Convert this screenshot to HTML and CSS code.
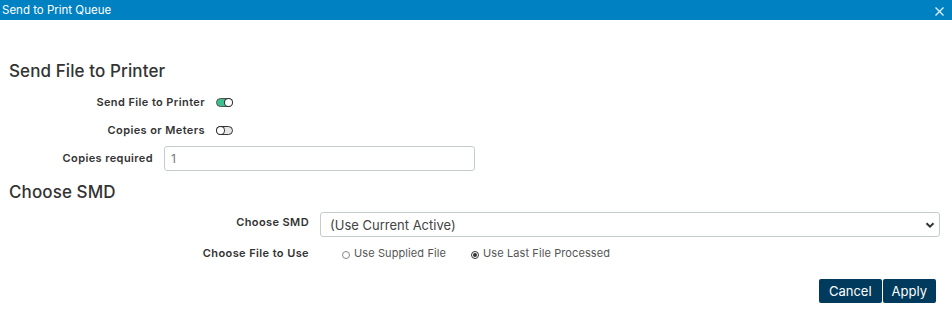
FILE: index.html
```html
<!DOCTYPE html>
<html lang="en">
<head>
  <meta charset="utf-8">
  <title>Send to Print Queue</title>
  <link rel="stylesheet" href="styles.css">
</head>
<body>
  <div class="dialog">
    <div class="dialog-title">
      <span>Send to Print Queue</span>
      <svg class="close" width="9" height="9" viewBox="0 0 9 9"><path d="M0.5 0.5 8.5 8.5 M8.5 0.5 0.5 8.5" fill="none" stroke="#d8f0ff" stroke-width="1.4"/></svg>
    </div>
    <div class="dialog-body">
      <h3 class="section-title first">Send File to Printer</h3>
      <div class="row">
        <label class="lbl lbl-wide">Send File to Printer</label>
        <span class="toggle on"></span>
      </div>
      <div class="row">
        <label class="lbl lbl-wide">Copies or Meters</label>
        <span class="toggle"></span>
      </div>
      <div class="row">
        <label class="lbl lbl-narrow">Copies required</label>
        <input class="text-input" type="text" value="1">
      </div>

      <h3 class="section-title">Choose SMD</h3>
      <div class="row">
        <label class="lbl lbl-smd">Choose SMD</label>
        <div class="select">
          <span>(Use Current Active)</span>
          <svg width="10" height="8" viewBox="0 0 10 8"><path d="M1.5 2.2 5 5.6 8.5 2.2" fill="none" stroke="#333" stroke-width="2"/></svg>
        </div>
      </div>
      <div class="row row-radio">
        <label class="lbl lbl-smd">Choose File to Use</label>
        <div class="radios">
          <span class="radio-opt"><span class="radio"></span>Use Supplied File</span>
          <span class="radio-opt"><span class="radio checked"></span>Use Last File Processed</span>
        </div>
      </div>
    </div>
    <div class="dialog-buttons">
      <button type="button" class="btn btn-cancel">Cancel</button>
      <button type="button" class="btn">Apply</button>
    </div>
  </div>
</body>
</html>
```

FILE: styles.css
```css
body {
  margin: 0;
  font-family: "Inter", "Open Sans", sans-serif;
  color: #333;
  background: white;
}
.dialog {
  width: 952px;
  height: 316px;
}
.dialog-title {
  height: 20px;
  background: #0081c2;
  color: white;
  font-size: 11.5px;
  display: flex;
  justify-content: space-between;
  align-items: center;
  padding: 0 8px 0 2px;
}
.close {
  margin-top: 3px;
}
.dialog-body {
  padding: 0 12px 0 9px;
}
.section-title {
  font-size: 17px;
  font-weight: 500;
  letter-spacing: 0.1px;
  margin: 5px 0 0;
  height: 30px;
  line-height: 30px;
}
.section-title.first {
  margin: 36px 0 2px;
}
.row {
  display: flex;
  align-items: center;
  min-height: 28px;
}
.lbl {
  font-size: 11px;
  font-weight: 600;
  letter-spacing: 0.4px;
  text-align: right;
  padding-right: 11px;
}
.lbl-wide {
  width: 196px;
}
.lbl-narrow {
  width: 144px;
}
.lbl-smd {
  width: 300px;
}
.toggle {
  width: 17px;
  height: 9px;
  border: 1px solid #333;
  border-radius: 6px;
  background: #e6e6e6;
  position: relative;
  box-sizing: border-box;
}
.toggle::after {
  content: "";
  position: absolute;
  left: 0;
  top: 0;
  width: 7px;
  height: 7px;
  border-radius: 50%;
  background: white;
  box-shadow: 0 0 0 1px #333;
}
.toggle.on {
  background: #3cbf8c;
  border-color: #555;
}
.toggle.on::after {
  left: 8px;
}
.text-input {
  width: 311px;
  height: 25px;
  box-sizing: border-box;
  border: 1px solid #c4cccc;
  border-radius: 3px;
  font: inherit;
  font-size: 12px;
  color: #777;
  padding: 0 6px;
  margin: 2px 0 1px;
}
.select {
  width: 620px;
  height: 25px;
  box-sizing: border-box;
  border: 1px solid #c4cccc;
  border-radius: 3px;
  font-size: 13px;
  color: #444;
  display: flex;
  align-items: center;
  justify-content: space-between;
  padding: 0 4px 0 9px;
  margin-top: 5px;
}
.row-radio {
  min-height: 26px;
  margin-top: 3px;
}
.radios {
  display: flex;
  gap: 25px;
  padding-left: 22px;
  font-size: 11px;
  letter-spacing: 0.1px;
  color: #555;
}
.radio-opt {
  display: flex;
  align-items: center;
}
.radio {
  width: 8px;
  height: 8px;
  border: 1px solid #888;
  border-radius: 50%;
  margin: 3px 4px 0 0;
  box-sizing: border-box;
  position: relative;
}
.radio.checked {
  border-color: #333;
}
.radio.checked::after {
  content: "";
  position: absolute;
  left: 1px;
  top: 1px;
  width: 4px;
  height: 4px;
  border-radius: 50%;
  background: #333;
}
.dialog-buttons {
  display: flex;
  justify-content: flex-end;
  gap: 1px;
  padding: 13px 16px 0 0;
}
.btn {
  background: #003a5c;
  color: white;
  border: none;
  border-radius: 2px;
  font: inherit;
  font-size: 13px;
  height: 24px;
  padding: 0 9px;
  margin: 0;
}
.btn-cancel {
  padding: 0 10px;
}
```
